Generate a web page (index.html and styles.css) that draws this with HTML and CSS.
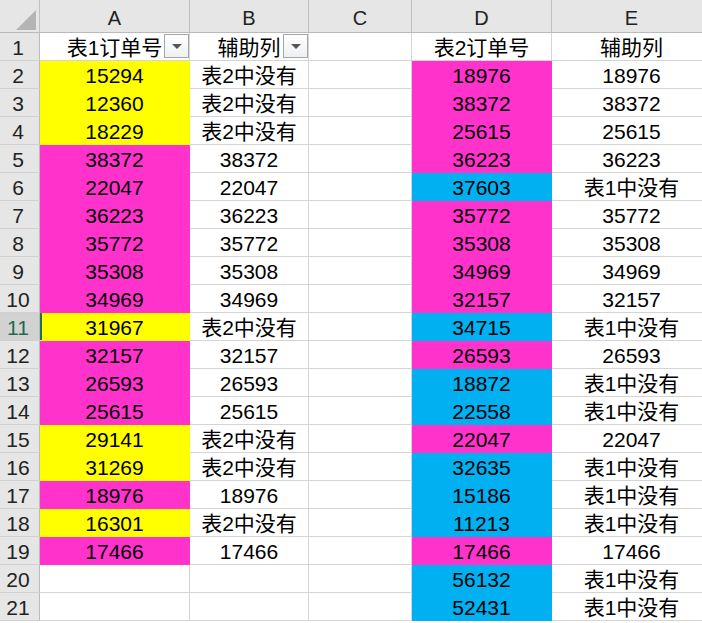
FILE: index.html
```html
<!DOCTYPE html>
<html lang="zh">
<head>
<meta charset="utf-8">
<link rel="stylesheet" href="styles.css">
</head>
<body>
<div class="sheet">
  <div class="ch corner"><span class="tri"></span></div>
  <div class="ch">A</div><div class="ch">B</div><div class="ch">C</div><div class="ch">D</div><div class="ch last">E</div>

  <div class="rh">1</div>
  <div class="c hd">表1订单号<span class="flt"><span class="arr"></span></span></div>
  <div class="c hd">辅助列<span class="flt"><span class="arr"></span></span></div>
  <div class="c"></div>
  <div class="c">表2订单号</div>
  <div class="c">辅助列</div>

  <div class="rh">2</div><div class="c y">15294</div><div class="c">表2中没有</div><div class="c"></div><div class="c m">18976</div><div class="c">18976</div>
  <div class="rh">3</div><div class="c y">12360</div><div class="c">表2中没有</div><div class="c"></div><div class="c m">38372</div><div class="c">38372</div>
  <div class="rh">4</div><div class="c y">18229</div><div class="c">表2中没有</div><div class="c"></div><div class="c m">25615</div><div class="c">25615</div>
  <div class="rh">5</div><div class="c m">38372</div><div class="c">38372</div><div class="c"></div><div class="c m">36223</div><div class="c">36223</div>
  <div class="rh">6</div><div class="c m">22047</div><div class="c">22047</div><div class="c"></div><div class="c b">37603</div><div class="c">表1中没有</div>
  <div class="rh">7</div><div class="c m">36223</div><div class="c">36223</div><div class="c"></div><div class="c m">35772</div><div class="c">35772</div>
  <div class="rh">8</div><div class="c m">35772</div><div class="c">35772</div><div class="c"></div><div class="c m">35308</div><div class="c">35308</div>
  <div class="rh">9</div><div class="c m">35308</div><div class="c">35308</div><div class="c"></div><div class="c m">34969</div><div class="c">34969</div>
  <div class="rh">10</div><div class="c m">34969</div><div class="c">34969</div><div class="c"></div><div class="c m">32157</div><div class="c">32157</div>
  <div class="rh sel">11</div><div class="c y act">31967</div><div class="c">表2中没有</div><div class="c"></div><div class="c b">34715</div><div class="c">表1中没有</div>
  <div class="rh">12</div><div class="c m">32157</div><div class="c">32157</div><div class="c"></div><div class="c m">26593</div><div class="c">26593</div>
  <div class="rh">13</div><div class="c m">26593</div><div class="c">26593</div><div class="c"></div><div class="c b">18872</div><div class="c">表1中没有</div>
  <div class="rh">14</div><div class="c m">25615</div><div class="c">25615</div><div class="c"></div><div class="c b">22558</div><div class="c">表1中没有</div>
  <div class="rh">15</div><div class="c y">29141</div><div class="c">表2中没有</div><div class="c"></div><div class="c m">22047</div><div class="c">22047</div>
  <div class="rh">16</div><div class="c y">31269</div><div class="c">表2中没有</div><div class="c"></div><div class="c b">32635</div><div class="c">表1中没有</div>
  <div class="rh">17</div><div class="c m">18976</div><div class="c">18976</div><div class="c"></div><div class="c b">15186</div><div class="c">表1中没有</div>
  <div class="rh">18</div><div class="c y">16301</div><div class="c">表2中没有</div><div class="c"></div><div class="c b">11213</div><div class="c">表1中没有</div>
  <div class="rh">19</div><div class="c m">17466</div><div class="c">17466</div><div class="c"></div><div class="c m">17466</div><div class="c">17466</div>
  <div class="rh">20</div><div class="c"></div><div class="c"></div><div class="c"></div><div class="c b">56132</div><div class="c">表1中没有</div>
  <div class="rh">21</div><div class="c"></div><div class="c"></div><div class="c"></div><div class="c b">52431</div><div class="c">表1中没有</div>
</div>
</body>
</html>
```

FILE: styles.css
```css
html, body {
  margin: 0;
  padding: 0;
  background: #fff;
  overflow: hidden;
}

.sheet {
  display: grid;
  grid-template-columns: 40px 150px 119px 103px 140px 160px;
  grid-template-rows: 33px repeat(21, 28px);
  font-family: "Liberation Sans", "Noto Sans CJK SC", sans-serif;
  font-size: 21px;
  color: #000;
  width: 712px;
}

.ch {
  box-sizing: border-box;
  background: #e6e6e6;
  border-right: 1px solid #c0c0c0;
  border-bottom: 1px solid #bababa;
  display: flex;
  justify-content: center;
  align-items: flex-end;
  padding-bottom: 2px;
  font-size: 20px;
  line-height: 24px;
  color: #222;
}

.corner {
  position: relative;
}

.tri {
  position: absolute;
  left: 16px;
  top: 10px;
  width: 0;
  height: 0;
  border-left: 20px solid transparent;
  border-bottom: 20px solid #b4b4b4;
}

.rh {
  box-sizing: border-box;
  background: #e6e6e6;
  border-right: 1px solid #bababa;
  border-bottom: 1px solid #d0d0d0;
  display: flex;
  justify-content: center;
  align-items: center;
  font-size: 21px;
  line-height: 24px;
  color: #222;
  padding-right: 3px;
  padding-top: 2px;
}

.rh.sel {
  background: #d2d2d2;
  color: #1e6b50;
}

.c {
  box-sizing: border-box;
  border-right: 1px solid #d4d4d4;
  border-bottom: 1px solid #d4d4d4;
  display: flex;
  justify-content: center;
  align-items: center;
  white-space: nowrap;
  position: relative;
  line-height: 24px;
  padding-top: 2px;
}

.y { background: #ffff00; border-color: #ffff00; }
.m { background: #ff33cc; border-color: #ff33cc; }
.b { background: #00b0f0; border-color: #00b0f0; }

.act {
  box-shadow: inset 2px 0 0 #217346;
}

.flt {
  position: absolute;
  right: 0;
  top: 1px;
  width: 25px;
  height: 24px;
  box-sizing: border-box;
  border: 1px solid #a6a6a6;
  background: linear-gradient(#ffffff, #eef0f3);
  display: flex;
  justify-content: center;
  align-items: center;
}

.arr {
  width: 0;
  height: 0;
  border-left: 5px solid transparent;
  border-right: 5px solid transparent;
  border-top: 5px solid #555;
}
```
